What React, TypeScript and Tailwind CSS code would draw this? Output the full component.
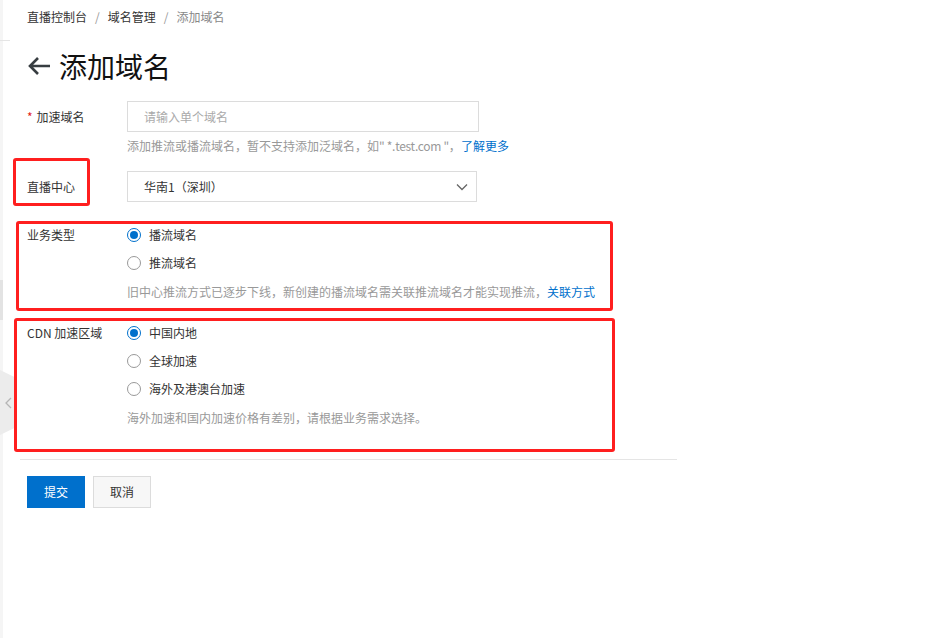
import { useState } from "react";

const font = { fontFamily: '"Noto Sans CJK SC", "Noto Sans", sans-serif' };

function Radio({ checked, label, onClick }: { checked: boolean; label: string; onClick: () => void }) {
  return (
    <label onClick={onClick} className="flex h-[28px] cursor-pointer items-center gap-[8px] text-[12px] text-[#333]">
      {checked ? (
        <span className="flex h-[14px] w-[14px] items-center justify-center rounded-full border border-[#0070cc]">
          <span className="h-[8px] w-[8px] rounded-full bg-[#0070cc]" />
        </span>
      ) : (
        <span className="h-[14px] w-[14px] rounded-full border border-[#999]" />
      )}
      {label}
    </label>
  );
}

export default function App() {
  const [type, setType] = useState("play");
  const [area, setArea] = useState("cn");

  return (
    <div className="relative flex min-h-[638px] w-[927px] bg-white" style={font}>
      {/* bord gauche de la sidebar */}
      <div className="flex w-[3px] flex-col bg-[#f5f5f5]">
        <div className="h-[280px]" />
        <div className="h-[40px] bg-[#e3e3e3]" />
      </div>
      <div className="absolute left-0 top-[40px] h-px w-[10px] bg-[#e5e5e5]" />
      <div className="absolute left-0 top-[370px] flex h-[65px] w-[16px] items-center justify-center bg-[#ececec] [clip-path:polygon(0_0,100%_12%,100%_88%,0_100%)]">
        <svg width="7" height="12" viewBox="0 0 7 12" fill="none">
          <path d="M6 1L1 6l5 5" stroke="#b5b5b5" strokeWidth="1.3" />
        </svg>
      </div>

      <main className="flex-1 pl-[24px]">
        <div className="flex h-[34px] items-center gap-[8px] pb-[1px] text-[12px] leading-[16px]">
          <span className="text-[#333]">直播控制台</span>
          <span className="text-[#999]">/</span>
          <span className="text-[#333]">域名管理</span>
          <span className="text-[#999]">/</span>
          <span className="text-[#888]">添加域名</span>
        </div>

        <div className="mt-[14px] flex h-[36px] items-center gap-[8px]">
          <svg width="24" height="20" viewBox="0 0 24 20" fill="none">
            <path d="M23 10H3M11 2l-8 8 8 8" stroke="#373d41" strokeWidth="2.6" />
          </svg>
          <h1 className="text-[28px] leading-[36px] font-normal text-[#111]">添加域名</h1>
        </div>

        <div className="mt-[17px] grid grid-cols-[100px_352px] text-[12px] leading-[16px]">
          <div className="flex h-[31px] items-center text-[#333]">
            <span className="mr-[4px] text-[#e2231a]">*</span>加速域名
          </div>
          <div>
            <input
              placeholder="请输入单个域名"
              className="h-[31px] w-[352px] border border-[#dcdcdc] px-[16px] text-[12px] text-[#333] outline-none placeholder:text-[#aaa]"
            />
          </div>
          <div />
          <div className="mt-[6px] w-[420px] whitespace-nowrap text-[#999]">
            添加推流或播流域名，暂不支持添加泛域名，如<span className="tracking-[-0.3px]">" *.test.com "</span>，<span className="text-[#0070cc]">了解更多</span>
          </div>
        </div>

        <div className="mt-[17px] grid grid-cols-[100px_auto] text-[12px] leading-[16px]">
          <div className="flex h-[31px] items-center text-[#333]">直播中心</div>
          <div className="flex h-[31px] w-[350px] items-center justify-between border border-[#dcdcdc] pl-[16px] pr-[8px] text-[#333]">
            <span>华南1（深圳）</span>
            <svg width="12" height="8" viewBox="0 0 12 8" fill="none">
              <path d="M1 1.5l5 5 5-5" stroke="#666" strokeWidth="1.3" />
            </svg>
          </div>
        </div>

        <div className="mt-[19px] grid grid-cols-[100px_auto] text-[12px] leading-[16px]">
          <div className="flex h-[28px] items-center text-[#333]">业务类型</div>
          <div>
            <Radio checked={type === "play"} label="播流域名" onClick={() => setType("play")} />
            <Radio checked={type === "push"} label="推流域名" onClick={() => setType("push")} />
            <div className="mt-[7px] text-[#999]">
              旧中心推流方式已逐步下线，新创建的播流域名需关联推流域名才能实现推流，<span className="text-[#0070cc]">关联方式</span>
            </div>
          </div>
        </div>

        <div className="mt-[19px] grid grid-cols-[100px_auto] text-[12px] leading-[16px]">
          <div className="flex h-[28px] items-center text-[#333]">CDN 加速区域</div>
          <div>
            <Radio checked={area === "cn"} label="中国内地" onClick={() => setArea("cn")} />
            <Radio checked={area === "global"} label="全球加速" onClick={() => setArea("global")} />
            <Radio checked={area === "oversea"} label="海外及港澳台加速" onClick={() => setArea("oversea")} />
            <div className="mt-[7px] text-[#999]">海外加速和国内加速价格有差别，请根据业务需求选择。</div>
          </div>
        </div>

        <div className="ml-[-7px] mt-[33px] h-px w-[657px] bg-[#e5e5e5]" />

        <div className="mt-[16px] flex gap-[8px] text-[12px]">
          <button className="h-[32px] w-[58px] bg-[#0070cc] text-white">提交</button>
          <button className="h-[32px] w-[58px] border border-[#dcdcdc] bg-[#f7f7f7] text-[#333]">取消</button>
        </div>
      </main>

      {/* annotations rouges */}
      <div className="pointer-events-none absolute left-[13px] top-[158px] h-[48px] w-[77px] rounded-[3px] border-[3px] border-[#ff1f1f]" />
      <div className="pointer-events-none absolute left-[16px] top-[221px] h-[90px] w-[597px] rounded-[3px] border-[3px] border-[#ff1f1f]" />
      <div className="pointer-events-none absolute left-[14px] top-[318px] h-[134px] w-[601px] rounded-[3px] border-[3px] border-[#ff1f1f]" />
    </div>
  );
}
